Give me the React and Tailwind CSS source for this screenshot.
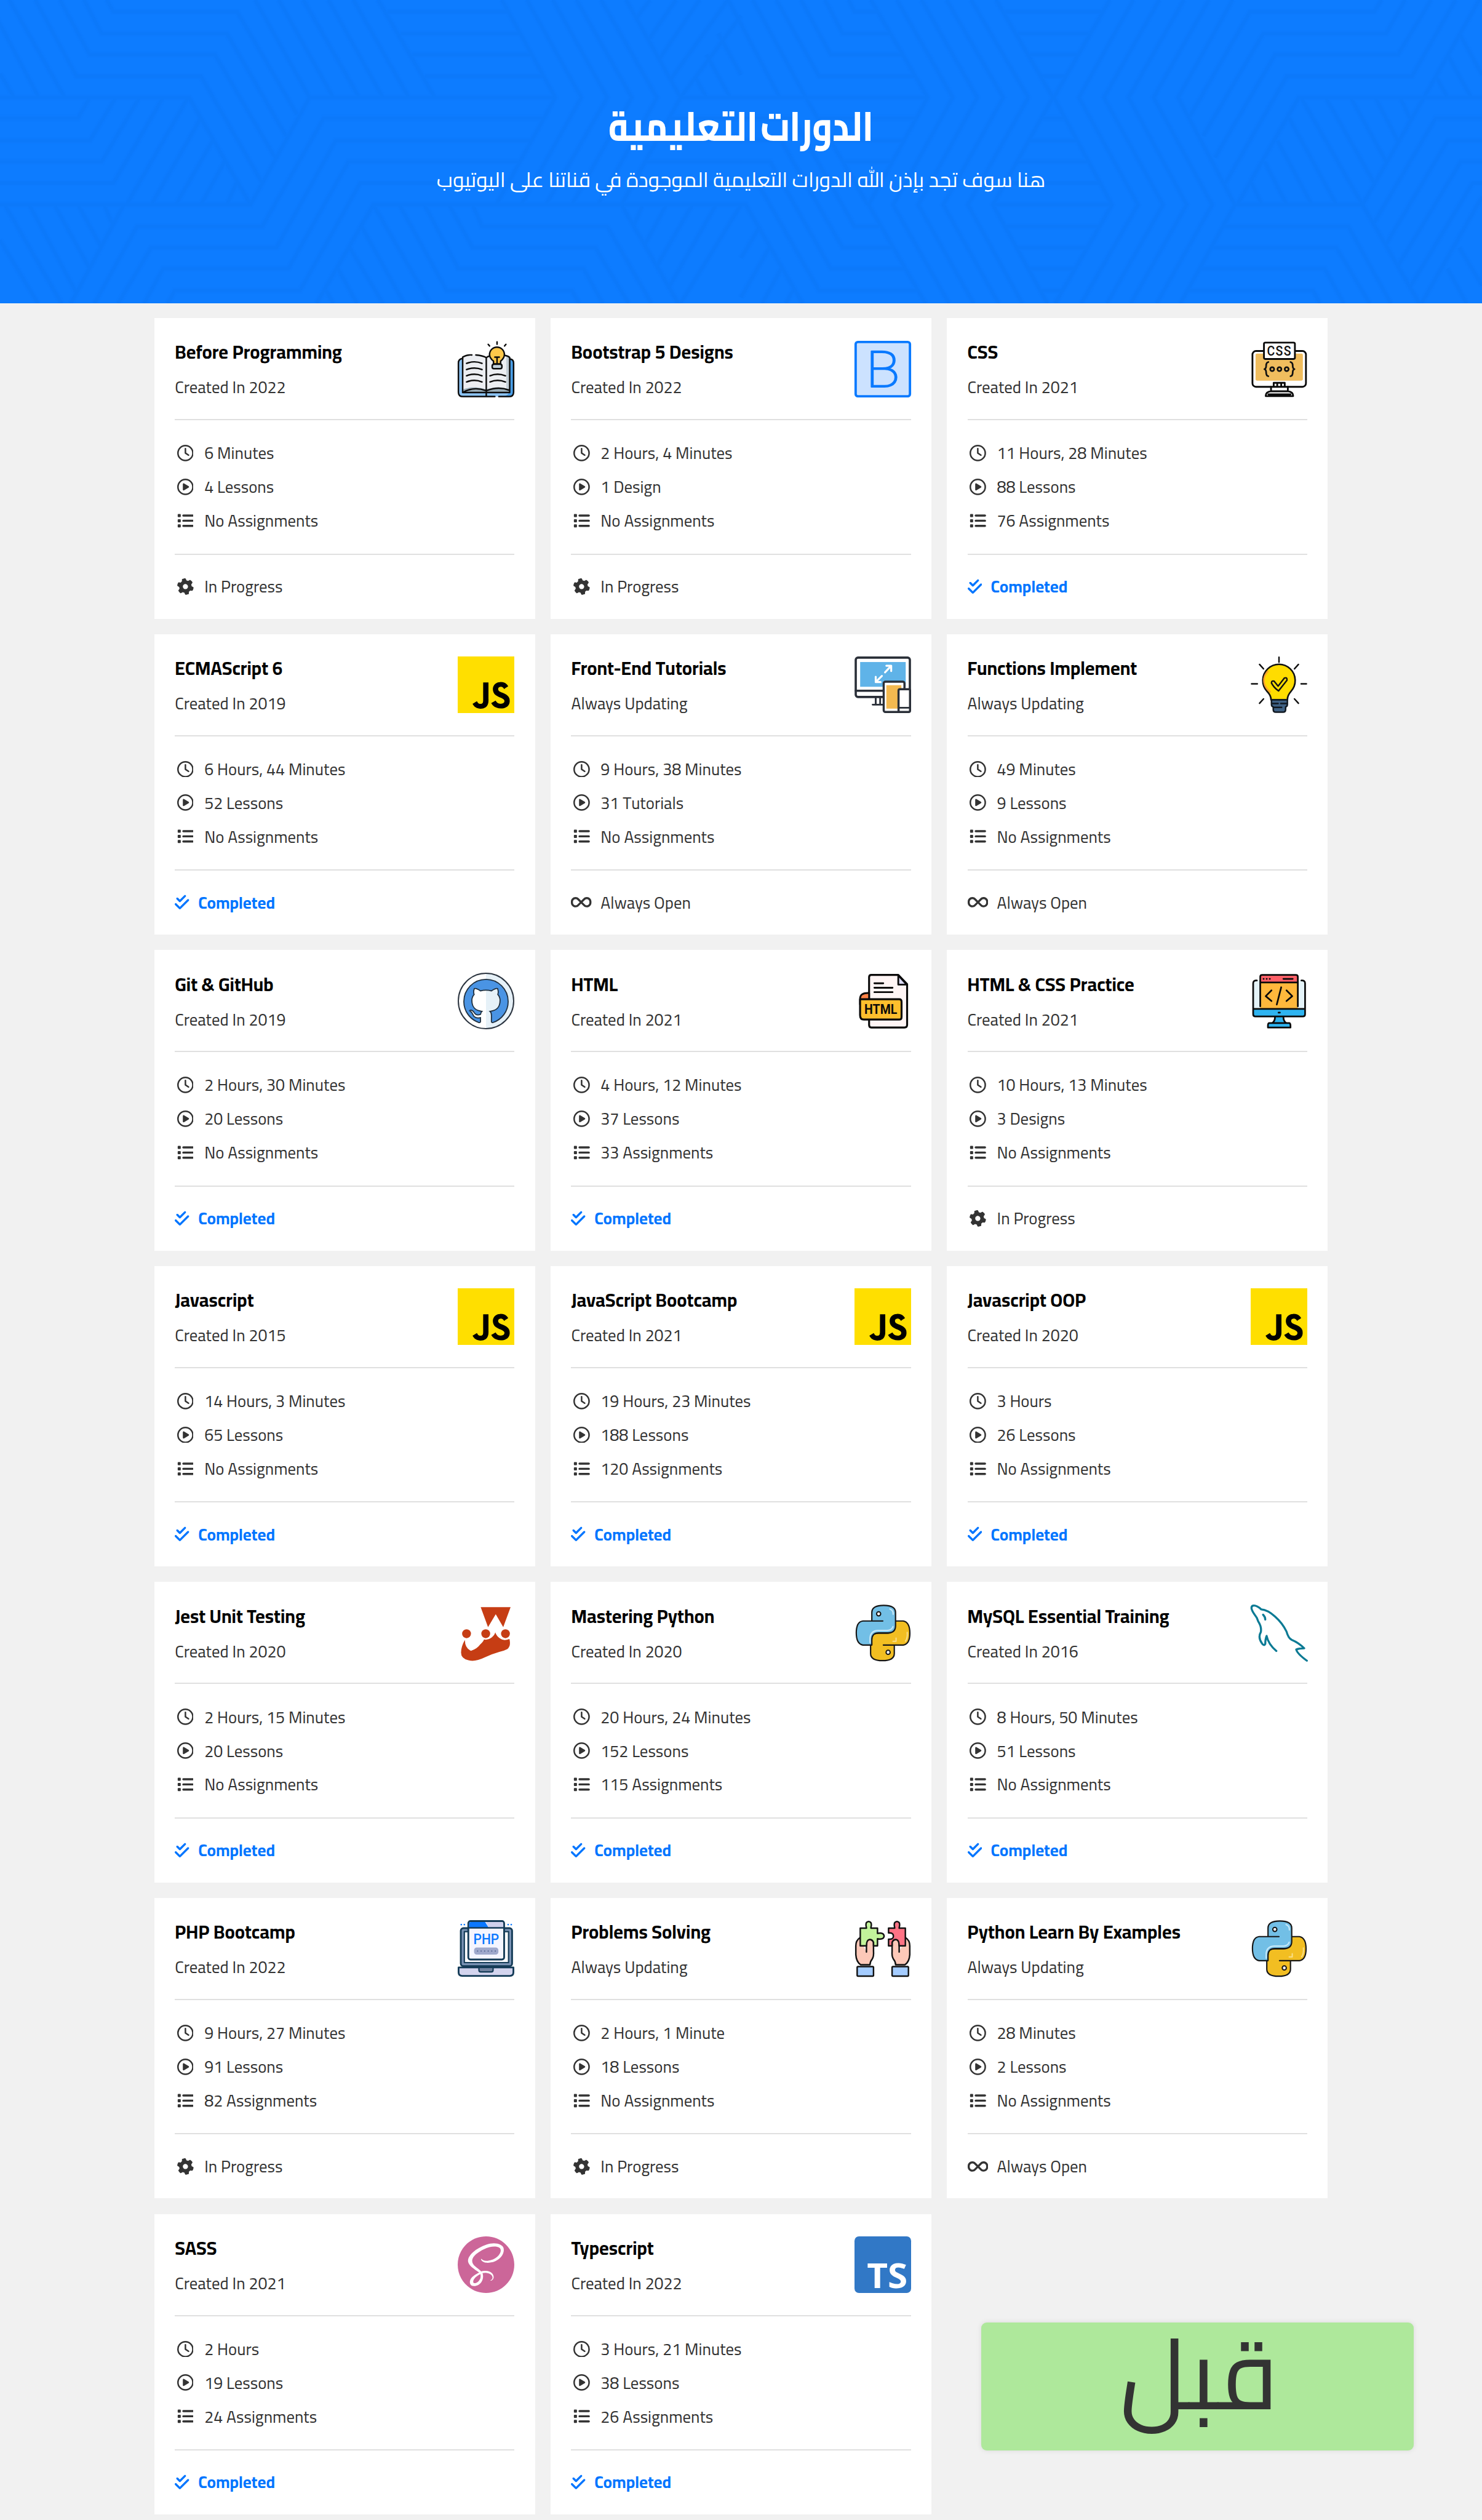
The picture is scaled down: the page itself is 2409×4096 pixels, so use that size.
import React from "react";
import { FaRegClock, FaRegCirclePlay, FaList, FaGear, FaInfinity, FaCheckDouble } from "react-icons/fa6";
import { SiJavascript, SiSass, SiGithub } from "react-icons/si";

const PATTERN_LEFT =
  "M-27 0L82 495M0 375L30 495M20 0L137 495M75 0L162 387H425L555 930M127 0L190 278H455L582 800M178 0L215 170H480L605 690M226 0L240 60H502L628 580" +
  "M0 495H400L530 1040M0 600H165L190 495M0 715H190L245 495M0 822H215L295 495M0 930H240L345 495M268 1040L398 495M320 1040L425 600M372 1040L450 715M425 1040L475 822M480 1040L500 930" +
  "M540 0L655 495M590 0L705 495M642 0L760 495M695 0L810 495M748 0L865 495M800 0L920 495M655 495H1175M820 60H1075M848 170H1100M873 278H1125M900 387H1150" +
  "M655 495L530 1040H0M262 1040L150 1540M1150 600H685L555 1150H290L200 1540M1123 715H710L585 1258H320L250 1540M1098 822H737L610 1365H345L305 1540M1074 930H762L635 1475H370L355 1540M1315 1040H790L670 1540" +
  "M1062 0L1175 495L1050 1040M1115 0L1230 495L1103 1040M1170 0L1285 495L1155 1040M1220 0L1337 495L1210 1040M1272 0L1390 495L1265 1040M1325 0L1440 495L1315 1040" +
  "M1440 495H1568M1415 600H1568M1390 715H1568M1365 822H1568M1340 930H1568M1315 1040H1568M1375 0L1347 90M1430 0L1373 200M1480 0L1395 300M1540 0L1420 400M1568 80L1440 495M1520 170L1568 380M1495 278L1545 495M1470 387L1495 495" +
  "M10 1040L130 1540M62 1040L160 1480M115 1040L190 1365M165 1040L215 1258M220 1040L240 1150M0 1220L80 1540M790 1040L910 1540M765 1150L855 1540M740 1258L810 1540M715 1365L755 1540M690 1475L705 1540" +
  "M1000 1040L1020 1150H1285L1378 1540M950 1040L1000 1258H1260L1330 1540M898 1040L970 1365H1235L1275 1540M845 1040L945 1475H1210L1225 1540M1315 1040L1435 1540M1360 1040L1342 1140M1410 1040L1365 1240M1465 1040L1390 1350M1515 1040L1415 1460M1568 1040L1440 1540";

const PATTERN_RIGHT =
  "M-27 0L82 495M25 0L137 495L268 1040M75 0L165 387H365M127 0L190 278H340M178 0L215 170H315M228 0L240 60H288M0 495H395" +
  "M0 600H110L240 1150H292M0 715H85L215 1258H320M0 822H62L190 1365H345M0 930H35L165 1475H372M0 1040H10L130 1540M40 1150L0 1310M60 1258L0 1510M85 1365L45 1540M110 1475L95 1540M165 600H370M190 715H345M215 822H320M240 930H295" +
  "M275 0L395 495L270 1040L390 1540M330 0L448 495L322 1040L440 1540M382 0L500 495L375 1040L492 1540M435 0L555 495L428 1040L545 1540M487 0L608 495L480 1040L595 1540M540 0L660 495L533 1040L648 1540" +
  "M560 60H762M587 170H735M612 278H710M636 387H686M636 600H686M610 715H712M587 822H737M560 930H762M535 1040H785M560 1150H762M585 1258H737M610 1365H710M636 1475H684" +
  "M780 0L662 495L785 1040L665 1540M830 0L715 495L840 1040L720 1540M885 0L768 495L893 1040L775 1540M937 0L820 495L943 1040L825 1540M990 0L873 495L997 1040L880 1540M1040 0L925 495L1045 1040L930 1540" +
  "M1355 0L1340 60H1077L950 590M1405 0L1365 170H1105L978 690M1460 0L1390 278H1130L1003 800M1512 0L1420 387H1155L1025 930M1562 0L1445 495H1180L1050 1040H1315" +
  "M1160 600L1260 1040M1135 715L1208 1040M1108 822L1155 1040M1080 930L1103 1040M1185 495L1315 1040M1237 495L1340 930M1290 495L1365 820M1342 495L1390 715M1395 495L1415 600" +
  "M1568 495H1445L1315 1040L1435 1540M1568 600H1470L1340 1130M1568 715H1495L1365 1240M1568 822H1523L1390 1350M1568 930H1548L1415 1460M1568 1000L1440 1540" +
  "M1022 1150H1285L1375 1540M1000 1258H1260L1330 1540M975 1365H1235L1275 1540M948 1475H1210L1225 1540M1520 170L1568 380M1495 278L1545 495M1470 387L1495 495M1520 1258L1568 1450M1495 1365L1535 1540";

function HeroPattern() {
  const strokes = [
    { w: 11, c: "#0d7bfe" },
    { w: 7, c: "#0d7afc" },
    { w: 4, c: "#0c79fa" },
  ];
  return (
    <svg className="absolute inset-0 h-full w-full" viewBox="0 0 2409 493" fill="none" aria-hidden="true">
      {strokes.map(({ w, c }) => (
        <g key={w} stroke={c} strokeWidth={w}>
          <path transform="scale(0.7682 0.32)" d={PATTERN_LEFT} vectorEffect="non-scaling-stroke" />
          <path transform="translate(1204.5 0) scale(0.7682 0.32)" d={PATTERN_RIGHT} vectorEffect="non-scaling-stroke" />
        </g>
      ))}
    </svg>
  );
}

function Art({ children }) {
  return (
    <svg viewBox="0 0 64 64" className="h-[92px] w-[92px] overflow-visible" fill="none" strokeLinecap="round" strokeLinejoin="round">
      {children}
    </svg>
  );
}

const BookArt = () => (
  <Art>
    <path d="M6 19.500Q.8 20 .8 25V58Q.8 63 6 63H58Q63.200 63 63.200 58V25Q63.200 20 58 19.500Z" fill="#8cc5f8" />
    <path d="M59 20Q63 20.500 63 25V58Q63 63 58 63H50Q59 62 59 55Z" fill="#4a9fe8" />
    <path d="M5.600 19Q18 13 32.300 18Q46 13 58.800 18V58H5.600Z" fill="#eceef2" />
    <path d="M55 17L58.800 18V57L55 55Z" fill="#c3ced6" />
    <path d="M5.600 55Q18 50 32.300 55Q46 50 58.800 55V58.500H5.600Z" fill="#9db0bb" />
    <g stroke="#0c0c0c" strokeWidth="1.700">
      <path d="M5.600 20Q.8 20.500 .8 25V58Q.8 63 6 63H42M46.500 63H58Q63.200 63 63.200 58V25Q63.200 21 59 20.500" />
      <path d="M5.600 58.500V18.500Q10 15.500 16 16M20.500 16Q28 16.500 32.300 19V62.500M32.300 19Q34 17.500 36 17.200M53 16.300Q57 17 58.800 18.800V58.500H5.600Q18 51 32.300 56.500Q46 51 58.800 56" />
      <path d="M10 25.500Q19 22 27.500 25.500M10 32.500Q19 29 27.500 32.500M10 39.500Q19 36 27.500 39.500M10 46.500Q19 43 27.500 46.500M36.500 39.500Q45 36 54 39.500M36.500 46.500Q45 43 54 46.500" />
      <path d="M40.500 26V23Q36 19.500 36 15.500A8.400 8.400 0 0 1 52.800 15.500Q52.800 19.500 48.500 23V26Z" fill="#ffc84a" />
      <path d="M42 18.500H47M44.500 18.500V26" />
      <rect x="39" y="26.500" width="11" height="5" rx="2" fill="#c3d3de" />
      <path d="M44.500 1.200V3.800M34.500 4L36 5.800M54.500 4L53 5.800" />
    </g>
  </Art>
);

const BootstrapArt = () => (
  <Art>
    <rect x="1.300" y="1.300" width="61.400" height="61.400" rx="2.500" fill="#cce2ff" stroke="#0a7aff" strokeWidth="2.700" />
    <text x="32" y="52" textAnchor="middle" fontFamily="Roboto, sans-serif" fontSize="57" fontWeight="100" textLength="38" lengthAdjust="spacingAndGlyphs" fill="#0a7aff" stroke="#0a7aff" strokeWidth="1.500">B</text>
  </Art>
);

const CssArt = () => (
  <Art>
    <rect x="2" y="11.500" width="60.500" height="40.500" rx="4" fill="#fff" stroke="#0b0b0b" strokeWidth="2" />
    <rect x="5.500" y="14.500" width="53.500" height="30.500" rx="1.500" fill="#f0bd5e" />
    <path d="M23 52V57M42 52V57M23 57H42Q48 57.500 48 62.500H17Q17 57.500 23 57M20 60.500H45M26 51.500V47.500H38.500V51.500M30 47.500V51.500M34.500 47.500V51.500" stroke="#0b0b0b" strokeWidth="2" />
    <rect x="15" y="2" width="35" height="18.500" rx="1.500" fill="#fff" stroke="#0b0b0b" strokeWidth="2" />
    <text x="32.500" y="16.500" textAnchor="middle" fontFamily="Roboto, sans-serif" fontSize="15" fontWeight="500" letterSpacing="1" textLength="28" lengthAdjust="spacingAndGlyphs" fill="#111">CSS</text>
    <g stroke="#111" strokeWidth="1.900">
      <path d="M20 24Q17.500 24.500 17.500 28Q17.500 31.500 15.500 32Q17.500 32.500 17.500 36Q17.500 39.500 20 40M45 24Q47.500 24.500 47.500 28Q47.500 31.500 49.500 32Q47.500 32.500 47.500 36Q47.500 39.500 45 40" />
      <circle cx="24.300" cy="32" r="2.200" /><circle cx="32.500" cy="32" r="2.200" /><circle cx="40.700" cy="32" r="2.200" />
    </g>
  </Art>
);

const FrontEndArt = () => (
  <Art>
    <rect x="1.400" y="1.300" width="61.200" height="44.500" rx="2.500" fill="#fff" stroke="#2a2f38" strokeWidth="2.500" />
    <rect x="6.400" y="6.300" width="51.500" height="28" fill="#5fb3e8" />
    <path d="M1.400 38.800H33" stroke="#2a2f38" strokeWidth="2.500" />
    <path d="M24 46.500V54.500M20.500 54.500H33M29 46.500V54" stroke="#2a2f38" strokeWidth="2" />
    <path d="M34.500 18L41 11M36 10.500H41.500V16.500M31 22L24.500 28.500M24 23V29H29.500" stroke="#fff" strokeWidth="2.200" />
    <rect x="33" y="28.500" width="23.500" height="34.300" rx="2" fill="#fff" stroke="#2a2f38" strokeWidth="2.400" />
    <rect x="36" y="32.500" width="17" height="26.500" fill="#f3b950" />
    <rect x="49.800" y="37" width="13" height="25.800" rx="1.500" fill="#fff" stroke="#2a2f38" strokeWidth="2.400" />
    <path d="M50 58H62.500" stroke="#2a2f38" strokeWidth="1.800" />
  </Art>
);

const IdeaArt = () => (
  <Art>
    <path d="M23 49Q23 44 18.500 39.500A18.300 18.300 0 1 1 45.500 39.500Q41.500 44 41.500 49Z" fill="#ffdc00" stroke="#111" strokeWidth="1.800" />
    <path d="M22 40Q14 34 15 25Q16 20 19.500 17" stroke="#ff9f2e" strokeWidth="1.600" />
    <path d="M23.500 49H41.500V54Q41.500 56.500 39.500 57V60Q39.500 63 36.500 63H28.500Q25.500 63 25.500 60V57Q23.500 56.500 23.500 54Z" fill="#3f6184" stroke="#101820" strokeWidth="1.700" />
    <path d="M24 53.200H31M34 53.200H41M26 57.500H35" stroke="#101820" strokeWidth="1.700" />
    <path d="M23.500 30Q23.500 27 26.500 28L31 33.500L38 24.500Q41.500 23 41 27L31.500 39Q26 35 23.500 30Z" stroke="#111" strokeWidth="1.700" fill="#ffdc00" />
    <path d="M32 .9V6.500M1 31H7.500M57 31H63M10 9L14.500 14M54 9L49.500 14M10 53L14.500 48M54 53L49.500 48" stroke="#111" strokeWidth="1.700" />
  </Art>
);

const GithubArt = () => (
  <div className="grid h-[92px] w-[92px] place-items-center rounded-full border-[2px] border-[#2c3540] bg-[linear-gradient(90deg,#ffffff_50%,#e6f1f8_50%)]">
    <SiGithub className="h-[72px] w-[72px] overflow-visible fill-[#4a94e4] stroke-[#20303f] stroke-[0.6]" />
  </div>
);

const HtmlArt = () => (
  <Art>
    <path d="M19 2.500H49.500L59.500 13V59Q59.500 62 56.500 62H19Q16.500 62 16.500 59V5Q16.500 2.500 19 2.500Z" fill="#fff5f5" stroke="#0a0a0a" strokeWidth="2.200" />
    <path d="M49.500 3V13.500H59Z" fill="#d9d9f5" stroke="#0a0a0a" strokeWidth="2" />
    <path d="M22.500 12H32.500M22.500 17H43M22.500 22H43" stroke="#0a0a0a" strokeWidth="2" />
    <path d="M16.500 23Q6.300 22.500 6.300 29.500V36H16.500Z" fill="#ff8246" stroke="#0a0a0a" strokeWidth="2" />
    <path d="M6.300 30H50.500Q53.200 30 53.200 33V50Q53.200 53 50.500 53H10.500Q6.300 53 6.300 48Z" fill="#fdbf2d" stroke="#0a0a0a" strokeWidth="2.200" />
    <text x="29.700" y="46.800" textAnchor="middle" fontFamily="Roboto, sans-serif" fontSize="15.500" fontWeight="700" textLength="37" lengthAdjust="spacingAndGlyphs" fill="#0a0a0a">HTML</text>
  </Art>
);

const PracticeArt = () => (
  <Art>
    <path d="M2.800 41V11Q2.800 8.500 5.300 8.500H59Q61.500 8.500 61.500 11V41Z" fill="#e4f3f8" />
    <path d="M10.800 41V4.500Q10.800 2.500 13 2.500H51Q53.300 2.500 53.300 4.500V41Z" fill="#ffb83c" />
    <path d="M10.800 11V4.500Q10.800 2.500 13 2.500H51Q53.300 2.500 53.300 4.500V11Z" fill="#ff6068" />
    <path d="M2.800 41H61.500V47Q61.500 49.500 59 49.500H5.300Q2.800 49.500 2.800 47Z" fill="#2fb4f0" />
    <path d="M27.500 49.500H37Q37 55 40.500 57H45V62H19.500V57H24Q27.500 55 27.500 49.500Z" fill="#2fb4f0" />
    <g stroke="#0a0a0a" strokeWidth="1.900">
      <path d="M10.800 38V4.500Q10.800 2.500 13 2.500H51Q53.300 2.500 53.300 4.500V38M10.800 11H53.300M37 7H47.500M14.500 7H14.700M18 7H18.200M21.500 7H21.700" />
      <path d="M7 8.800Q2.800 8.500 2.800 12V47Q2.800 49.500 5.300 49.500H59Q61.500 49.500 61.500 47V12Q61.500 8.500 57.300 8.800M2.800 41H61.500" />
      <path d="M27.500 50Q27.500 55 24 57M37 50Q37 55 40.500 57M21 57H43.500Q45 57 45 60V62H19.500V60Q19.500 57 21 57ZM31.500 45.200H33" />
      <path d="M23.500 20L17 26.500L23.500 32M40.500 20L47 26.500L40.500 32M34.500 16.500L29.500 36" />
    </g>
  </Art>
);

const SNAKE = "M32 18.600H9.500Q2 19.500 2 32Q2 44.500 9.500 45.800H19.600V40Q19.600 32 27.500 32H38Q46.400 32 46.400 24V9Q46.400 1 33 1Q19.600 1 19.600 9V18.600";
const PythonArt = () => (
  <Art>
    <g transform="rotate(180 32.300 32.200)">
      <path d={SNAKE} fill="#f2be22" stroke="#161616" strokeWidth="1.500" />
      <path d="M7 23Q4.500 26 5 33" stroke="#f9df8b" strokeWidth="1.400" />
    </g>
    <path d={SNAKE} fill="#72bfe6" stroke="#161616" strokeWidth="1.500" />
    <path d="M17.500 43V39Q17.500 29.500 27 29.300H37Q42 29.300 43.500 25M40 5Q44 6.500 43.700 11" stroke="#c5e7f8" strokeWidth="1.500" />
    <path d="M47 38V41.500H43.500" stroke="#f9df8b" strokeWidth="1.400" />
    <circle cx="27.300" cy="10.500" r="2.300" fill="#fff" stroke="#161616" strokeWidth="1.400" />
    <circle cx="38" cy="54" r="2.300" fill="#fff" stroke="#161616" strokeWidth="1.400" />
  </Art>
);

const MysqlArt = () => (
  <Art>
    <path d="M29 52.500Q20 45 18 35.500Q16.500 39 16.500 44.500Q15 47.500 12.500 43.500Q8 37 11.500 31Q12.500 25 8.500 19Q7.500 15 4.500 11.500Q-1.500 3 2.500 1.300Q6.500 .5 12 5.500Q19 6 27.500 13.500Q36 21 40.500 30.500Q42.500 38 46.500 40Q54 43 60.500 49.500Q55 49.500 51.500 50.800Q52.500 55.500 63.500 63.500" stroke="#0b7a94" strokeWidth="2.300" />
    <path d="M14 11.500Q16.500 14 16.500 17" stroke="#0b7a94" strokeWidth="2.300" />
  </Art>
);

const PhpArt = () => (
  <Art>
    <rect x="3.500" y="9" width="58" height="43" rx="3" fill="#7b93b5" stroke="#143b57" strokeWidth="2" />
    <rect x="7.500" y="13" width="50" height="35" fill="#fafbff" stroke="#143b57" strokeWidth="1.500" />
    <rect x="12" y="1" width="40.500" height="43.500" rx="2.500" fill="#f4f5ff" stroke="#143b57" strokeWidth="2" />
    <path d="M13 8.500V4Q13 2 15 2H31L35 8.500Z" fill="#0a78ff" />
    <path d="M32 2H49.500Q51.500 2 51.500 4V8.500H35Z" fill="#cfd0ec" />
    <path d="M12 8.700H52.500" stroke="#143b57" strokeWidth="1.800" />
    <text x="32.300" y="27" textAnchor="middle" fontFamily="Roboto, sans-serif" fontSize="16" fontWeight="500" textLength="29" lengthAdjust="spacingAndGlyphs" fill="#0a78ff">PHP</text>
    <rect x="18.500" y="31" width="27.500" height="8" rx="3" fill="#9fa9cc" />
    <path d="M22.500 35H43" stroke="#50628f" strokeWidth="1.400" strokeDasharray="0 4" />
    <path d="M4 5H4.100M7.500 5H7.600M57 5H57.100M60.500 5H60.600" stroke="#0a78ff" strokeWidth="1.800" />
    <path d="M1 53.500H63V59Q63 63 59 63H5Q1 63 1 59Z" fill="#d3d4ee" stroke="#143b57" strokeWidth="2" />
    <path d="M24 53.500H40V56.500Q40 58.500 38 58.500H26Q24 58.500 24 56.500Z" fill="#71829f" stroke="#143b57" strokeWidth="1.500" />
  </Art>
);

const Hand = () => (
  <g stroke="#111" strokeWidth="1.700">
    <path d="M6 20Q1.500 23 1.500 29V39Q2 47 7 50.500H17.500Q17.500 47 20 44Q22 41 21.500 35V25Q20 21.500 16.500 22Q13 23 13.500 28V36" fill="#fcc8b8" />
    <rect x="3" y="52.500" width="18.500" height="10.800" rx="1" fill="#a4ccff" />
  </g>
);
const PuzzleArt = () => (
  <Art>
    <Hand />
    <path d="M6.500 9H13.500Q11.500 2 16 1.500Q20.500 2 18.500 9H26V15Q33 13.500 33.500 18Q33 22.500 26 21V29H21.500V25Q20 21.500 16.500 22Q13.500 23 13.500 29H6.500Z" fill="#c2f39b" stroke="#111" strokeWidth="1.700" />
    <g transform="translate(64 0) scale(-1 1)"><Hand /></g>
    <path d="M57.500 9H50.500Q52.500 2 48 1.500Q43.500 2 45.500 9H38.500V14.500Q44 14 44 18Q44 22 38.500 21.500V29H42.500V25Q44 21.500 47.500 22Q50.500 23 50.500 29H57.500Z" fill="#ff7385" stroke="#111" strokeWidth="1.700" />
  </Art>
);

const JestArt = () => (
  <Art>
    <g fill="#c63d14">
      <path d="M26 3H59.800L51.500 25.500L43 11L34.300 25.500Z" />
      <circle cx="10" cy="33" r="5" /><circle cx="31.700" cy="33" r="5" /><circle cx="54" cy="33" r="5" />
      <path d="M8.200 40Q8 49 15 52.300Q22 50 25.500 45Q29 42 29.800 39.500Q34 40.500 38 37.500Q41.500 35 42.500 31.500Q44 36 48 38.500Q52 41.500 58.500 39Q60.500 47 56 50.500Q52 52.700 47 53.500Q38 56 30 60Q20 65 12 63Q3.500 61 3.800 54Q4 47 8.200 40Z" />
    </g>
  </Art>
);

const TsArt = () => (
  <Art>
    <rect width="64" height="64" rx="5" fill="#3178c6" />
    <text x="37" y="58.500" textAnchor="middle" fontFamily="'Open Sans', sans-serif" fontSize="39" fontWeight="700" textLength="46" lengthAdjust="spacingAndGlyphs" fill="#fff">TS</text>
  </Art>
);

const JsArt = () => <div className="h-[92px] w-[92px] bg-black"><SiJavascript className="h-full w-full text-[#ffdf00]" /></div>;
const SassArt = () => <SiSass className="h-[92px] w-[92px] text-[#cc6699]" />;

const courses = [
  ["Before Programming", "Created In 2022", "6 Minutes", "4 Lessons", "No Assignments", "progress", BookArt],
  ["Bootstrap 5 Designs", "Created In 2022", "2 Hours, 4 Minutes", "1 Design", "No Assignments", "progress", BootstrapArt],
  ["CSS", "Created In 2021", "11 Hours, 28 Minutes", "88 Lessons", "76 Assignments", "done", CssArt],
  ["ECMAScript 6", "Created In 2019", "6 Hours, 44 Minutes", "52 Lessons", "No Assignments", "done", JsArt],
  ["Front-End Tutorials", "Always Updating", "9 Hours, 38 Minutes", "31 Tutorials", "No Assignments", "open", FrontEndArt],
  ["Functions Implement", "Always Updating", "49 Minutes", "9 Lessons", "No Assignments", "open", IdeaArt],
  ["Git & GitHub", "Created In 2019", "2 Hours, 30 Minutes", "20 Lessons", "No Assignments", "done", GithubArt],
  ["HTML", "Created In 2021", "4 Hours, 12 Minutes", "37 Lessons", "33 Assignments", "done", HtmlArt],
  ["HTML & CSS Practice", "Created In 2021", "10 Hours, 13 Minutes", "3 Designs", "No Assignments", "progress", PracticeArt],
  ["Javascript", "Created In 2015", "14 Hours, 3 Minutes", "65 Lessons", "No Assignments", "done", JsArt],
  ["JavaScript Bootcamp", "Created In 2021", "19 Hours, 23 Minutes", "188 Lessons", "120 Assignments", "done", JsArt],
  ["Javascript OOP", "Created In 2020", "3 Hours", "26 Lessons", "No Assignments", "done", JsArt],
  ["Jest Unit Testing", "Created In 2020", "2 Hours, 15 Minutes", "20 Lessons", "No Assignments", "done", JestArt],
  ["Mastering Python", "Created In 2020", "20 Hours, 24 Minutes", "152 Lessons", "115 Assignments", "done", PythonArt],
  ["MySQL Essential Training", "Created In 2016", "8 Hours, 50 Minutes", "51 Lessons", "No Assignments", "done", MysqlArt],
  ["PHP Bootcamp", "Created In 2022", "9 Hours, 27 Minutes", "91 Lessons", "82 Assignments", "progress", PhpArt],
  ["Problems Solving", "Always Updating", "2 Hours, 1 Minute", "18 Lessons", "No Assignments", "progress", PuzzleArt],
  ["Python Learn By Examples", "Always Updating", "28 Minutes", "2 Lessons", "No Assignments", "open", PythonArt],
  ["SASS", "Created In 2021", "2 Hours", "19 Lessons", "24 Assignments", "done", SassArt],
  ["Typescript", "Created In 2022", "3 Hours, 21 Minutes", "38 Lessons", "26 Assignments", "done", TsArt],
];

const TiltedGear = ({ className }) => <FaGear className={`${className} -rotate-12`} />;

function Row({ icon: Icon, wide, children }) {
  return (
    <div className="flex h-[54.9px] items-center gap-[14.5px]">
      <span className="flex w-[33.4px] shrink-0 justify-center">
        <Icon className={wide ? "h-[26.8px] w-[33.4px]" : "h-[26.8px] w-[26.8px]"} />
      </span>
      <span>{children}</span>
    </div>
  );
}

function Status({ kind }) {
  if (kind === "done") {
    return (
      <div className="flex items-center gap-[14.5px] font-bold text-[#0075ff]">
        <FaCheckDouble className="h-[26.8px] w-[23.4px]" />
        <span>Completed</span>
      </div>
    );
  }
  return kind === "open" ? <Row icon={FaInfinity} wide>Always Open</Row> : <Row icon={TiltedGear}>In Progress</Row>;
}

function CourseCard({ course }) {
  const [title, created, time, lessons, tasks, kind, Picture] = course;
  return (
    <article className="flex h-[488.5px] flex-col bg-white px-[33.5px] text-[26.77px] text-[#333]">
      <div className="flex h-[166px] justify-between border-b-2 border-[#e0e0e0]">
        <div className="flex flex-col pt-[27px]">
          <h2 className="flex h-[57.8px] items-center text-[30.1px] font-bold text-black">{title}</h2>
          <p className="flex h-[55.4px] items-center">{created}</p>
        </div>
        <div className="pt-[36.5px]"><Picture /></div>
      </div>
      <div className="flex h-[218.5px] flex-col justify-center border-b-2 border-[#e0e0e0]">
        <Row icon={FaRegClock}>{time}</Row>
        <Row icon={FaRegCirclePlay}>{lessons}</Row>
        <Row icon={FaList}>{tasks}</Row>
      </div>
      <div className="flex flex-1 items-center pb-[1px]"><Status kind={kind} /></div>
    </article>
  );
}

export default function App() {
  return (
    <div className="relative h-[4096px] w-[2409px] overflow-hidden bg-[#f1f1f1] font-['Cairo','Roboto',sans-serif]">
      <header dir="rtl" className="relative flex h-[493px] flex-col items-center bg-[#0d7cff] pt-[160px] text-white">
        <HeroPattern />
        <h1 className="relative flex h-[90px] scale-x-[0.822] items-center whitespace-nowrap text-[66.9px] font-extrabold [word-spacing:-9px]">الدورات التعليمية</h1>
        <p className="relative flex h-[84px] items-center whitespace-nowrap text-[33.46px]">هنا سوف تجد بإذن الله الدورات التعليمية الموجودة في قناتنا على اليوتيوب</p>
      </header>
      <main className="mx-auto mt-[24px] grid w-[1907.4px] grid-cols-3 gap-[25.1px]">
        {courses.map((course) => <CourseCard key={course[0]} course={course} />)}
      </main>
      <div dir="rtl" className="absolute top-[3775px] left-[1594.5px] flex h-[208px] w-[703px] items-center justify-center rounded-[9px] bg-[#aee89b] pb-[41px] pl-[6px] text-[160.6px] leading-none text-[#333] shadow-[0_0_8px_rgba(0,0,0,0.1)]">
        <span>قبل</span>
      </div>
    </div>
  );
}
